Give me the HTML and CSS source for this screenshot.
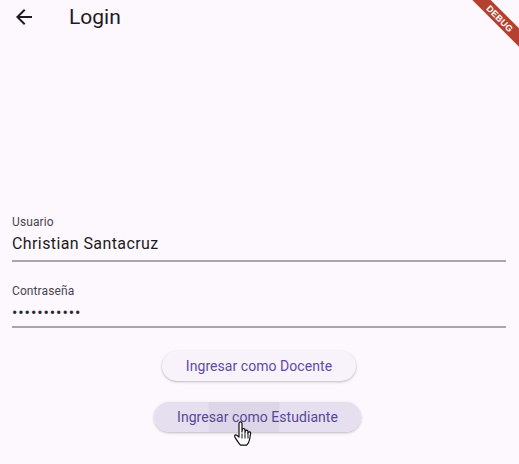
FILE: index.html
```html
<!DOCTYPE html>
<html lang="es">
<head>
<meta charset="utf-8">
<title>Login</title>
<link rel="stylesheet" href="styles.css">
</head>
<body>
<div class="app">
  <header class="appbar">
    <span class="back">
      <svg width="24" height="24" viewBox="0 0 24 24"><path d="M20 11H7.83l5.59-5.59L12 4l-8 8 8 8 1.41-1.41L7.83 13H20v-2z" fill="#1d1b20"/></svg>
    </span>
    <h1 class="title">Login</h1>
  </header>

  <main class="form">
    <div class="field field-user">
      <div class="label">Usuario</div>
      <div class="value">Christian Santacruz</div>
    </div>
    <div class="field field-pass">
      <div class="label">Contraseña</div>
      <div class="value dots">•••••••••••</div>
    </div>

    <div class="actions">
      <button class="btn">Ingresar como Docente</button>
      <button class="btn btn-active">Ingresar como Estudiante</button>
    </div>
  </main>

  <div class="debug"><span>DEBUG</span></div>

  <svg class="cursor" width="20" height="28" viewBox="0 0 20 28">
    <path d="M6 2.5c0-1 .7-1.6 1.5-1.6S9 1.5 9 2.5V11l.2-2.1c.1-.9.8-1.4 1.5-1.3.8 0 1.3.6 1.3 1.4V12l.3-1.7c.2-.8.8-1.2 1.5-1.1.7.1 1.2.7 1.1 1.5l-.1 2 .4-1c.3-.7 1-1 1.6-.8.6.2 1 .9.8 1.6l-.9 5.5c-.4 2.6-1.5 4.6-3 6.1H7.5C6 22.5 4.2 20 2.6 17.4c-.7-1.1-1.1-2.2-.9-2.8.3-.8 1.3-1 2.1-.4L6 16V2.5z" fill="#fff" stroke="#111" stroke-width="1.2" stroke-linejoin="round"/>
    <path d="M9 12.5v5M12 12.5v5M15 13v4.5" stroke="#111" stroke-width="1" fill="none"/>
  </svg>
</div>
</body>
</html>
```

FILE: styles.css
```css
* { box-sizing: border-box; }

html, body {
  margin: 0;
  padding: 0;
  height: 100%;
}

body {
  background: #fdf7fe;
  font-family: Roboto, "Noto Sans", sans-serif;
  color: #1d1b20;
  overflow: hidden;
}

.app {
  position: relative;
  width: 519px;
  height: 464px;
  overflow: hidden;
}

.appbar {
  height: 34px;
  display: flex;
  align-items: center;
  padding-left: 12px;
}

.back {
  width: 24px;
  height: 24px;
  display: flex;
}

.title {
  margin: 0 0 0 33px;
  font-size: 21px;
  font-weight: 400;
  line-height: 28px;
  color: #1d1b20;
}

.form {
  padding: 180px 13px 0 12px;
  display: flex;
  flex-direction: column;
}

.field {
  border-bottom: 2px solid #a9a5ad;
}

.field-user {
  padding-bottom: 4px;
}

.field-pass {
  margin-top: 21px;
  padding-bottom: 1px;
}

.label {
  font-size: 12px;
  line-height: 16px;
  color: #49454f;
  letter-spacing: 0.1px;
}

.value {
  padding-top: 2px;
  font-size: 16px;
  line-height: 24px;
  color: #1d1b20;
  letter-spacing: 0.4px;
}

.dots {
  letter-spacing: 0.9px;
  color: #2a2730;
}

.actions {
  margin-top: 23px;
  display: flex;
  flex-direction: column;
  align-items: center;
  gap: 21px;
}

.btn {
  height: 30px;
  padding: 0 24px;
  border: none;
  border-radius: 15px;
  background: #f8f2fb;
  color: #5f4c9f;
  font-family: Roboto, "Noto Sans", sans-serif;
  font-size: 14px;
  font-weight: 400;
  letter-spacing: 0.05px;
  box-shadow: 0 1px 2px rgba(0, 0, 0, 0.18), 0 1px 3px 1px rgba(0, 0, 0, 0.06);
}

.btn-active {
  margin-left: -3px;
  background: linear-gradient(90deg, #e6dff0 0%, #e6dff0 26%, #ddd5e8 27%, #ddd5e8 60%, #e6dff0 61%, #e6dff0 100%);
  color: #584896;
  padding: 0 23px;
}

.debug {
  position: absolute;
  left: 440px;
  top: 12px;
  width: 120px;
  height: 13px;
  background: #b4402f;
  transform: rotate(45deg);
  display: flex;
  align-items: center;
  justify-content: center;
}

.debug span {
  color: #fff;
  font-family: "Liberation Sans", sans-serif;
  font-weight: 700;
  font-size: 9px;
  letter-spacing: 0.2px;
}

.cursor {
  position: absolute;
  left: 233px;
  top: 421px;
}
```
